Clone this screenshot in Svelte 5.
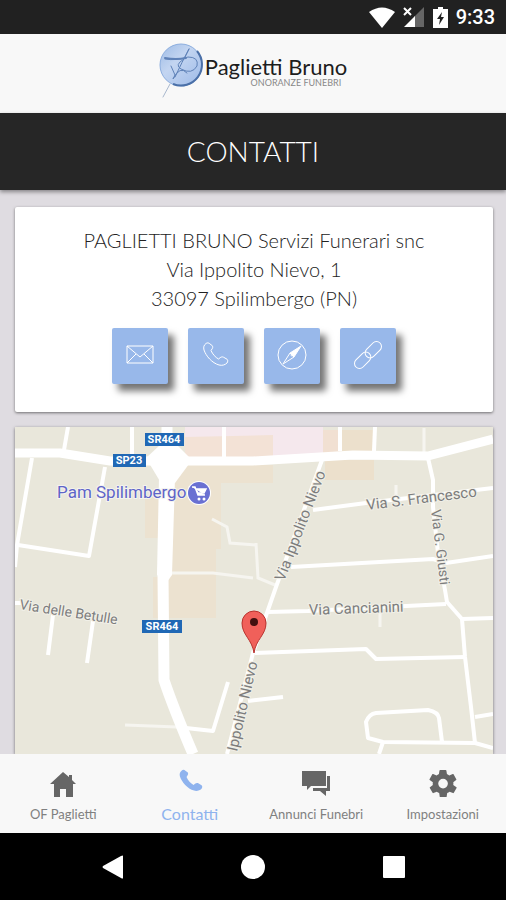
<script lang="ts">
    const PHONE =
        "M3 1.5C1 3 .2 5 1 8c2 6 8 13 15 15 3 .8 6 0 8-2 1-1.5 1-3 0-3.8l-3.5-2c-1-.6-2.5-.3-3.5.6l-1.5 1.2c-3-1.5-6-5-7.5-8.5L9 7c.8-1 .9-2 .4-3.2L6.8 1.8C5.8.7 4 .6 3 1.5z";

    const address = [
        "PAGLIETTI BRUNO Servizi Funerari snc",
        "Via Ippolito Nievo, 1",
        "33097 Spilimbergo (PN)",
    ];

    const actions = [
        { id: "mail", label: "Email" },
        { id: "phone", label: "Telefono" },
        { id: "compass", label: "Indicazioni" },
        { id: "link", label: "Sito web" },
    ];

    const tabs = [
        { id: "home", label: "OF Paglietti" },
        { id: "contacts", label: "Contatti" },
        { id: "notices", label: "Annunci Funebri" },
        { id: "settings", label: "Impostazioni" },
    ];

    // thin streets, drawn under the main roads
    const streets = [
        "M53 0L49 23",
        "M117 0V28",
        "M209 0V30",
        "M17 31L2 118L0 140",
        "M90 40L74 129L3 118",
        "M325 0V24",
        "M360 0L359 24",
        "M307 33L261 160L238 226L212 327",
        "M298 83L351 76L478 61",
        "M413 31L418 53V80L423 126L430 163L432 175L447 192L450 230L456 280L460 316",
        "M276 140L418 132L431 136L478 129",
        "M253 185L293 184L391 179L431 177",
        "M447 192L478 191",
        "M240 226L351 222L361 232L450 230",
        "M233 274L268 270",
        "M162 300L198 304L213 255",
        "M38 188L33 228",
        "M78 194L72 236",
        "M0 176H8",
        "M478 321L460 316L368 315L353 311L351 295Q354 287 361 286L413 283Q423 285 424 291L427 315",
        "M368 315L364 327",
        "M460 290L478 287",
    ];

    const lanes = [
        "M409 1V26",
        "M381 58V72",
        "M365 186V200",
        "M197 92L212 100L215 116L241 118",
        "M241 116L243 151L260 158",
        "M155 146L198 146L238 151",
        "M110 298L162 300",
    ];

    let active = $state("contacts");
</script>

<div class="screen">
    <div class="status-bar">
        <svg width="26" height="21" viewBox="0 0 26 21">
            <path d="M0 5Q13-4 26 5L13 21z" fill="#fff" />
        </svg>
        <svg width="22" height="21" viewBox="0 0 22 21">
            <path d="M21 0V20H11V10z" fill="#666" />
            <path d="M1 20L12 9V20z" fill="#fff" />
            <path d="M1 1L8 8M8 1L1 8" stroke="#fff" stroke-width="2" />
        </svg>
        <svg width="15" height="21" viewBox="0 0 15 21">
            <path d="M5 0H10V2H15V21H0V2H5z" fill="#fff" />
            <path d="M9 5L4 12H7L6 18L11 10H8z" fill="#212121" />
        </svg>
        <span class="clock">9:33</span>
    </div>

    <header class="brand">
        <svg class="logo" width="46" height="58" viewBox="0 0 46 58">
            <defs>
                <linearGradient id="disc" x1="0" y1="0" x2="1" y2="1">
                    <stop offset="0" stop-color="#9dbbe5" />
                    <stop offset="0.4" stop-color="#c3d5f1" />
                    <stop offset="1" stop-color="#9dbae8" />
                </linearGradient>
            </defs>
            <circle cx="22" cy="23" r="21" fill="url(#disc)" stroke="#8badde" />
            <path d="M38 9A21 21 0 0 1 14 42" fill="none" stroke="#4b70a8" stroke-width="2" />
            <g fill="none" stroke="#5f82b8" stroke-linecap="round">
                <path d="M6 17Q17 19 29 15Q40 15 38 24Q33 33 22 27Q15 23 25 17L30 7" />
                <path d="M6 16Q17 18 27 16" stroke-width="2" />
                <path d="M30 7Q23 20 16 35M12 24L16 33L14 37Q21 23 28 31" />
                <path d="M11 42L4 55" stroke="#a9b8ce" />
            </g>
        </svg>
        <div class="brand-text">
            <span class="brand-name">Paglietti Bruno</span>
            <span class="brand-sub">ONORANZE FUNEBRI</span>
        </div>
    </header>

    <h1>CONTATTI</h1>

    <main>
        <section class="card">
            <address>
                {#each address as line}
                    <div>{line}</div>
                {/each}
            </address>
            <div class="actions">
                {#each actions as action}
                    <a href="#{action.id}" class="action" aria-label={action.label}>
                        <svg width="32" height="32" viewBox="0 0 32 32">
                            {#if action.id === "mail"}
                                <path d="M3 6H29V23H3zM3 6L16 17L29 6M3 23L12 14M29 23L20 14" />
                            {:else if action.id === "phone"}
                                <path d={PHONE} transform="translate(3 2)" />
                            {:else if action.id === "compass"}
                                <circle cx="16" cy="15" r="14" />
                                <path d="M25 6L18 17L14 13z" fill="#fff" />
                                <path d="M14 13L7 24L18 17" />
                                <circle cx="16" cy="15" r="1" />
                            {:else}
                                <g transform="rotate(-45 16 15)">
                                    <rect x="-1" y="10" width="19" height="10" rx="5" />
                                    <rect x="14" y="10" width="19" height="10" rx="5" />
                                </g>
                            {/if}
                        </svg>
                    </a>
                {/each}
            </div>
        </section>

        <section class="map">
            <svg viewBox="0 0 478 327" preserveAspectRatio="xMidYMid slice">
                <rect width="478" height="327" fill="#e9e7db" />
                <path d="M145 38H258V56H206V122H201V191H138V150H145V111H130V70H145z" fill="#ece2d0" />
                <path d="M170 0H308V30H170z" fill="#f5e8ed" />
                <path d="M170 10L258 8V30H170z" fill="#f3e2d6" />
                <path d="M308 3H325V26H308z" fill="#f1e0d2" />
                <path d="M325 3H359V26H325zM310 33H359V53H310z" fill="#ece0cc" />

                <g fill="none" stroke="#f6f5f0" stroke-width="3">
                    {#each lanes as d}
                        <path {d} />
                    {/each}
                </g>
                <g fill="none" stroke="#fff" stroke-width="4" stroke-linejoin="round">
                    {#each streets as d}
                        <path {d} />
                    {/each}
                </g>
                <g fill="none" stroke="#fff" stroke-linejoin="round">
                    <path d="M0 26H45L95 34H238L338 28L413 29L478 12" stroke-width="9" />
                    <path d="M152 0V60L148 148L149 253Q158 280 178 327" stroke-width="11" />
                </g>
                <path d="M131 31L145 18H162L177 33L160 56H146z" fill="#fff" />
                <path d="M144 50H160L157 148L152 155L142 148z" fill="#fff" />

                <g class="road-sign">
                    <rect x="130" y="6" width="39" height="13" />
                    <text x="149" y="16">SR464</text>
                    <rect x="98" y="27" width="33" height="13" />
                    <text x="114" y="37">SP23</text>
                    <rect x="127" y="193" width="40" height="13" />
                    <text x="147" y="203">SR464</text>
                </g>

                <text class="place" x="42" y="71">Pam Spilimbergo</text>
                <circle cx="184" cy="66" r="12" fill="#fff" />
                <circle cx="184" cy="66" r="11" fill="#6970d2" />
                <path d="M177 60H180L183 68H190M181 62H191L189 66H183z" fill="#fff" stroke="#fff" stroke-width="1.5" />
                <circle cx="184" cy="72" r="1.5" fill="#fff" />
                <circle cx="189" cy="72" r="1.5" fill="#fff" />

                <g class="street-name">
                    <text transform="translate(269 155) rotate(-69)">Via Ippolito Nievo</text>
                    <text transform="translate(352 83) rotate(-7)">Via S. Francesco</text>
                    <text class="short" transform="translate(416 83) rotate(83)">Via G. Giusti</text>
                    <text class="short" transform="translate(4 182) rotate(9)">Via delle Betulle</text>
                    <text transform="translate(294 188) rotate(-2)">Via Cancianini</text>
                    <text transform="translate(222 325) rotate(-77)">Ippolito Nievo</text>
                </g>

                <path
                    d="M239 226C237 212 227 208 227 196A12 12 0 0 1 251 196C251 208 241 212 239 226z"
                    fill="#f0605a"
                    stroke="#b8322e"
                />
                <circle cx="239" cy="195" r="4" fill="#42100f" />
            </svg>
        </section>
    </main>

    <nav class="tabs">
        {#each tabs as tab}
            <button
                type="button"
                class="tab"
                class:active={active === tab.id}
                onclick={() => (active = tab.id)}
            >
                <svg width="28" height="28" viewBox="0 0 28 28">
                    {#if tab.id === "home"}
                        <path d="M14 3L20 8V6H23V11L27 15H24V28H17V20H11V28H5V15H1z" />
                    {:else if tab.id === "contacts"}
                        <path d={PHONE} transform="translate(3 0) scale(.94)" />
                    {:else if tab.id === "notices"}
                        <path d="M0 2H24V17H9L5 21V17H0z" />
                        <path d="M25 7H28V22H24V27L18 22H11V19H25z" />
                    {:else}
                        <path
                            transform="translate(-2.5 -2) scale(1.38)"
                            d="M19.4 13c0-.3.1-.6.1-1s0-.7-.1-1l2.1-1.6c.2-.2.2-.4.1-.6l-2-3.5c-.1-.2-.4-.3-.6-.2l-2.5 1c-.5-.4-1.1-.7-1.7-1l-.4-2.600c0-.2-.2-.4-.5-.4h-4c-.2 0-.5.2-.5.4l-.4 2.600c-.6.3-1.200.6-1.700 1l-2.500-1c-.2-.1-.5 0-.6.2l-2 3.500c-.1.2-.1.500.1.600L4.600 11c0 .3-.1.700-.1 1s0 .7.100 1l-2.100 1.600c-.2.200-.2.400-.1.600l2 3.500c.1.200.4.300.6.200l2.500-1c.5.400 1.100.7 1.700 1l.4 2.600c0 .2.200.4.500.4h4c.2 0 .5-.2.500-.4l.4-2.600c.6-.3 1.200-.6 1.700-1l2.500 1c.2.100.5 0 .6-.2l2-3.500c.1-.2.100-.5-.1-.6zM12 15.500a3.500 3.500 0 1 1 0-7 3.500 3.500 0 0 1 0 7z"
                        />
                    {/if}
                </svg>
                <span>{tab.label}</span>
            </button>
        {/each}
    </nav>

    <div class="system-nav">
        <button type="button" aria-label="Indietro">
            <svg width="24" height="24" viewBox="0 0 24 24"><path d="M23 1V23Q23 24 21 23L3 13Q2 12 3 11L21 1Q23 0 23 1z" /></svg>
        </button>
        <button type="button" aria-label="Home">
            <svg width="24" height="24" viewBox="0 0 24 24"><circle cx="12" cy="12" r="12" /></svg>
        </button>
        <button type="button" aria-label="Recenti">
            <svg width="24" height="24" viewBox="0 0 24 24"><rect x="1" y="1" width="22" height="22" rx="1" /></svg>
        </button>
    </div>
</div>

<style>
    :global(body) {
        margin: 0;
        background: #dfdce1;
    }

    .screen {
        display: flex;
        flex-direction: column;
        min-height: 100vh;
        background: #dfdce1;
        font-family: Lato, "Open Sans", sans-serif;
    }

    .status-bar {
        display: flex;
        align-items: center;
        justify-content: flex-end;
        gap: 8px;
        height: 34px;
        padding-right: 11px;
        background: #212121;
    }

    .clock {
        color: #fff;
        font: 500 20px/34px Roboto, sans-serif;
    }

    .brand {
        display: flex;
        justify-content: center;
        box-sizing: border-box;
        height: 79px;
        padding-top: 8px;
        background: #f8f8f8;
    }

    .brand-text {
        display: flex;
        flex-direction: column;
        padding-top: 14px;
    }

    .brand-name {
        color: #1d1d1d;
        font-size: 22px;
        line-height: 22px;
    }

    .brand-sub {
        align-self: flex-end;
        padding-right: 6px;
        color: #888;
        font-size: 9px;
        line-height: 10px;
    }

    h1 {
        position: relative;
        margin: 0;
        background: #262626;
        color: #fff;
        font-size: 28px;
        font-weight: 300;
        line-height: 77px;
        text-align: center;
        box-shadow: 0 2px 4px rgba(0, 0, 0, 0.4);
    }

    main {
        display: flex;
        flex: 1;
        flex-direction: column;
        gap: 15px;
        padding: 17px 13px 0 15px;
    }

    .card {
        padding: 19px 0 28px;
        background: #fff;
        border-radius: 2px;
        box-shadow: 0 1px 3px rgba(0, 0, 0, 0.5);
    }

    address {
        color: #222;
        font-size: 20px;
        font-style: normal;
        font-weight: 300;
        line-height: 29px;
        text-align: center;
    }

    .actions {
        display: flex;
        justify-content: center;
        gap: 20px;
        padding-top: 15px;
    }

    .action {
        display: flex;
        align-items: center;
        justify-content: center;
        width: 56px;
        height: 56px;
        background: #98b8ea;
        border-radius: 2px;
        box-shadow: 6px 7px 7px rgba(0, 0, 0, 0.55);
    }

    .action svg {
        fill: none;
        stroke: #fff;
        overflow: visible;
    }

    .map {
        display: flex;
        flex: 1;
        min-height: 240px;
        box-shadow: 0 1px 3px rgba(0, 0, 0, 0.5);
    }

    .map svg {
        flex: 1;
        width: 100%;
        min-width: 0;
    }

    .road-sign rect {
        fill: #2068b5;
    }

    .road-sign text {
        fill: #fff;
        font: 700 11px Roboto, sans-serif;
        text-anchor: middle;
    }

    .place {
        fill: #5e64c8;
        stroke: #f4f3ee;
        stroke-width: 2px;
        paint-order: stroke;
        font: 17px Roboto, sans-serif;
    }

    .street-name text {
        fill: #7d7d7d;
        stroke: #f1f0e8;
        stroke-width: 2px;
        paint-order: stroke;
        font: 15px Roboto, sans-serif;
    }

    .street-name .short {
        font-size: 14px;
    }

    .tabs {
        display: grid;
        grid-template-columns: repeat(4, 1fr);
        position: relative;
        height: 79px;
        background: #f8f8f8;
    }

    .tab {
        display: flex;
        flex-direction: column;
        align-items: center;
        gap: 7px;
        padding: 15px 0 0;
        border: 0;
        background: none;
        color: #808080;
        font-family: inherit;
        font-size: 13px;
        line-height: 20px;
        white-space: nowrap;
        cursor: pointer;
    }

    .tab svg {
        fill: #666;
    }

    .tab.active {
        color: #8fb3ee;
        font-size: 16px;
    }

    .tab.active svg {
        fill: #8fb3ee;
    }

    .system-nav {
        display: grid;
        grid-template-columns: repeat(3, 1fr);
        height: 67px;
        padding: 0 42px;
        background: #000;
    }

    .system-nav button {
        display: flex;
        align-items: center;
        justify-content: center;
        padding: 0;
        border: 0;
        background: none;
        cursor: pointer;
    }

    .system-nav svg {
        fill: #fff;
    }
</style>
